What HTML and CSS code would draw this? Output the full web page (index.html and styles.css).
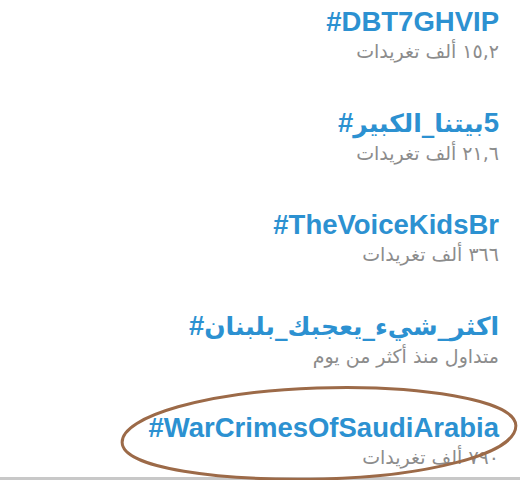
FILE: index.html
```html
<!DOCTYPE html>
<html lang="ar">
<head>
<meta charset="utf-8">
<title>Trends</title>
<link rel="stylesheet" href="styles.css">
</head>
<body>
<div class="screen">
  <ul class="trends">
    <li class="trend">
      <div class="tag" dir="ltr">#DBT7GHVIP</div>
      <div class="meta" dir="rtl">١٥,٢ ألف تغريدات</div>
    </li>
    <li class="trend">
      <div class="tag" dir="ltr">#<bdi class="ar" dir="rtl">بيتنا_الكبير</bdi>5</div>
      <div class="meta" dir="rtl">٢١,٦ ألف تغريدات</div>
    </li>
    <li class="trend">
      <div class="tag" dir="ltr">#TheVoiceKidsBr</div>
      <div class="meta" dir="rtl">٣٦٦ ألف تغريدات</div>
    </li>
    <li class="trend">
      <div class="tag" dir="ltr">#<bdi class="ar" dir="rtl">اكثر_شيء_يعجبك_بلبنان</bdi></div>
      <div class="meta" dir="rtl">متداول منذ أكثر من يوم</div>
    </li>
    <li class="trend circled">
      <div class="tag" dir="ltr">#WarCrimesOfSaudiArabia</div>
      <div class="meta" dir="rtl">٧٩٠ ألف تغريدات</div>
      <svg class="ring" viewBox="0 0 402 100" width="402" height="100" aria-hidden="true">
        <path d="M 200 4 C 300 3, 398 20, 398 46 C 398 76, 300 95, 205 95 C 100 95, 4 80, 4 54 C 4 28, 90 5, 200 4 Z" fill="none" stroke="#9c6a48" stroke-width="3"/>
      </svg>
    </li>
  </ul>
  <div class="bottom-line"></div>
</div>
</body>
</html>
```

FILE: styles.css
```css
html, body {
  margin: 0;
  padding: 0;
  background: #ffffff;
}

.screen {
  width: 520px;
  height: 480px;
  display: flex;
  flex-direction: column;
  overflow: hidden;
}

.trends {
  list-style: none;
  margin: 0;
  padding: 7px 21px 0 0;
  flex: 1;
  display: flex;
  flex-direction: column;
  gap: 43px;
}

.trend {
  display: flex;
  flex-direction: column;
  align-items: flex-end;
  position: relative;
}

.tag {
  font-family: "Liberation Sans", "DejaVu Sans", sans-serif;
  font-weight: bold;
  font-size: 27.5px;
  line-height: 30px;
  color: #2c91d1;
  text-align: right;
}

.ar {
  font-family: "DejaVu Sans", sans-serif;
  font-size: 25px;
}

.meta {
  font-family: "DejaVu Sans", sans-serif;
  font-size: 19px;
  line-height: 27px;
  margin-top: 1px;
  color: #8c8c8c;
  text-align: right;
}

.ring {
  position: absolute;
  left: 118px;
  top: -29px;
  transform: rotate(-1.3deg);
}

.bottom-line {
  height: 3px;
  background: #c8c8c8;
}
```
